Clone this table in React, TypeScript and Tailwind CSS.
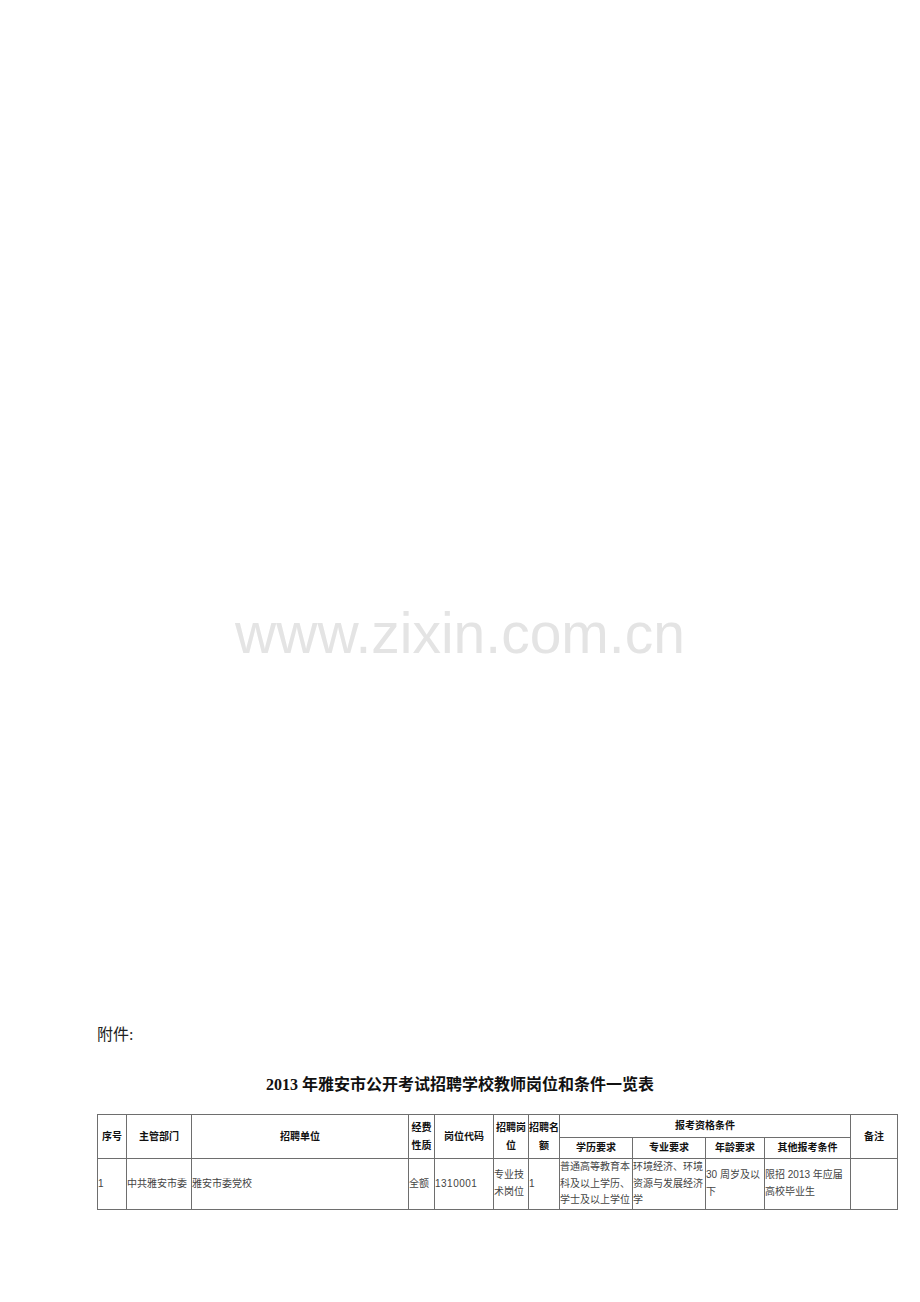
const cols = [29, 65, 217, 26, 59, 35, 31, 73, 73, 59, 86, 47];

const cell = 'border border-[#6e6e6e] px-0 py-0 align-middle';
const head = `${cell} text-center font-bold text-[10px] leading-[18px] text-[#111] whitespace-nowrap`;
const data = `${cell} text-left text-[10px] leading-[16.5px] text-[#444]`;

const App = () => {
  return (
    <div
      className="relative h-[1302px] w-[920px] bg-white"
      style={{ fontFamily: '"Liberation Sans", "Noto Sans CJK SC", sans-serif' }}
    >
      {/* watermark */}
      <div className="pointer-events-none absolute left-0 right-0 top-[597px] text-center text-[57px] leading-[72px] text-[#e4e4e4]">
        www.zixin.com.cn
      </div>

      <div className="px-[97px] pt-[1024px]">
        <p
          className="text-[16px] leading-[22px] text-[#222]"
          style={{ fontFamily: '"Liberation Serif", "Noto Sans CJK SC", serif' }}
        >
          附件:
        </p>

        <h1
          className="mt-[28px] text-center text-[16px] font-bold leading-[22px] text-[#111]"
          style={{ fontFamily: '"Liberation Serif", "Noto Sans CJK SC", serif' }}
        >
          2013 年雅安市公开考试招聘学校教师岗位和条件一览表
        </h1>

        <table className="mt-[18px] w-[801px] table-fixed border-collapse border border-[#6e6e6e]">
          <colgroup>
            {cols.map((w, i) => (
              <col key={i} style={{ width: w }} />
            ))}
          </colgroup>
          <thead>
            <tr className="h-[23px]">
              <th rowSpan={2} className={head}>序号</th>
              <th rowSpan={2} className={head}>主管部门</th>
              <th rowSpan={2} className={head}>招聘单位</th>
              <th rowSpan={2} className={head}>经费<br />性质</th>
              <th rowSpan={2} className={head}>岗位代码</th>
              <th rowSpan={2} className={head}>招聘岗<br />位</th>
              <th rowSpan={2} className={head}>招聘名<br />额</th>
              <th colSpan={4} className={head}>报考资格条件</th>
              <th rowSpan={2} className={head}>备注</th>
            </tr>
            <tr className="h-[21px]">
              <th className={head}>学历要求</th>
              <th className={head}>专业要求</th>
              <th className={head}>年龄要求</th>
              <th className={head}>其他报考条件</th>
            </tr>
          </thead>
          <tbody>
            <tr className="h-[50px]">
              <td className={data}>1</td>
              <td className={data}>中共雅安市委</td>
              <td className={data}>雅安市委党校</td>
              <td className={data}>全额</td>
              <td className={`${data} tracking-[0.5px]`}>1310001</td>
              <td className={data}>专业技术岗位</td>
              <td className={data}>1</td>
              <td className={data}>普通高等教育本科及以上学历、学士及以上学位</td>
              <td className={data}>环境经济、环境资源与发展经济学</td>
              <td className={data}>30 周岁及以下</td>
              <td className={data}>限招 2013 年应届高校毕业生</td>
              <td className={data}></td>
            </tr>
          </tbody>
        </table>
      </div>
    </div>
  );
};

export default App;
